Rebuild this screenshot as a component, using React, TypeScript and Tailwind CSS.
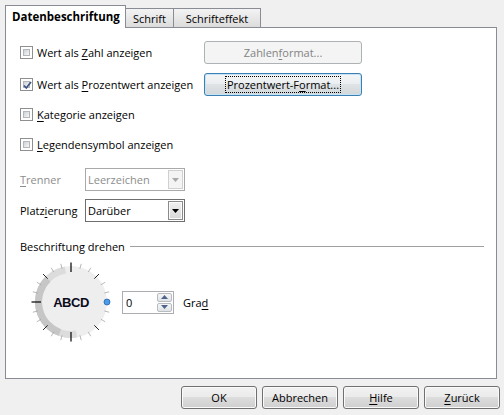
import React from "react";

const Check = ({ checked }: { checked?: boolean }) => (
  <span className="relative w-[13px] h-[13px] shrink-0 border border-[#8e8f8f] bg-white p-[2px] flex">
    <span className="flex-1 border border-[#b3b7bd] bg-[linear-gradient(135deg,#cdd1d6,#f7f7f7)]" />
    {checked && (
      <svg className="absolute left-[1px] top-[1px]" width="11" height="11" viewBox="0 0 11 11">
        <path d="M2 5.5 L4.3 8 L9 2" fill="none" stroke="#3e5283" strokeWidth="1.7" />
      </svg>
    )}
  </span>
);

const Btn = ({
  children,
  kind,
  w,
}: {
  children: React.ReactNode;
  kind: "normal" | "disabled" | "focus";
  w: string;
}) => {
  const base =
    "h-[23px] rounded-[3px] border flex items-center justify-center shrink-0 " + w + " ";
  const k =
    kind === "disabled"
      ? "border-[#adb2b5] bg-[#f4f4f4] text-[#838383]"
      : kind === "focus"
      ? "border-[#3c7fb1] bg-[linear-gradient(to_bottom,#f3f5f6_0%,#eceff1_45%,#dfe3e6_50%,#d2d7da_100%)] shadow-[inset_0_0_0_1px_#c6e4f6]"
      : "border-[#707070] bg-[linear-gradient(to_bottom,#f2f2f2_0%,#ebebeb_45%,#dddddd_50%,#cfcfcf_100%)] shadow-[inset_0_0_0_1px_#fafafa]";
  return <div className={base + k}>{children}</div>;
};

const U = ({ children }: { children: React.ReactNode }) => (
  <span className="underline underline-offset-[2px] decoration-[1px]">{children}</span>
);

const Arrow = ({ color }: { color: string }) => (
  <svg width="7" height="4" viewBox="0 0 7 4">
    <path d="M0 0 H7 L3.5 4 Z" fill={color} />
  </svg>
);

function Dial() {
  const c = 45;
  const p = (r: number, a: number) => {
    const t = (a * Math.PI) / 180;
    return [c + r * Math.cos(t), c - r * Math.sin(t)];
  };
  const arc = (r: number, a1: number, a2: number) => {
    const [x1, y1] = p(r, a1);
    const [x2, y2] = p(r, a2);
    const large = a2 - a1 > 180 ? 1 : 0;
    return `M${x1} ${y1} A${r} ${r} 0 ${large} 0 ${x2} ${y2}`;
  };
  const ticks = [];
  for (let a = 15; a < 360; a += 15) {
    const major = a % 90 === 0;
    const mid = a % 45 === 0 && !major;
    const r1 = major ? 30 : mid ? 33 : 34.5;
    const r2 = 39.5;
    const [x1, y1] = p(r1, a);
    const [x2, y2] = p(r2, a);
    ticks.push(
      <line
        key={a}
        x1={x1}
        y1={y1}
        x2={x2}
        y2={y2}
        stroke={major ? "#111" : mid ? "#222" : "#9a9a9a"}
        strokeWidth={major ? 1.3 : mid ? 1 : 0.7}
      />
    );
  }
  return (
    <svg width="90" height="90" viewBox="0 0 90 90" className="ml-[6px] shrink-0">
      <circle cx={c} cy={c} r={36} fill="#eeeeee" />
      <path d={arc(32.5, 100, 280)} stroke="#dcdcdc" strokeWidth="7" fill="none" />
      <path d={arc(32.5, 135, 250)} stroke="#c6c6c6" strokeWidth="7" fill="none" />
      {ticks}
      <circle cx={c + 36} cy={c} r={3} fill="#4b9be8" stroke="#2a64a8" strokeWidth="0.8" />
      <text
        x={c}
        y={c + 4.5}
        textAnchor="middle"
        fontFamily="'Liberation Sans', Arial, sans-serif"
        fontWeight="bold"
        fontSize="13"
        letterSpacing="-0.5"
        fill="#0b0b1a"
      >
        ABCD
      </text>
    </svg>
  );
}

export default function App() {
  return (
    <div className="w-[504px] h-[415px] bg-[#f0f0f0] flex flex-col font-['Open_Sans',sans-serif] text-[11px] leading-none text-black">
      {/* tabs */}
      <div className="flex items-end pl-[5px] pt-[5px] h-[27px]">
        <div className="relative z-10 w-[121px] h-[23px] -mb-px bg-white border border-b-0 border-[#898c95] flex items-center pl-[6px] font-bold text-[11.5px]">
          Datenbeschriftung
        </div>
        <div className="w-[49px] h-[19px] -ml-px border border-b-0 border-[#898c95] bg-[linear-gradient(to_bottom,#f3f3f3,#dcdcdc)] flex items-center justify-center">
          Schrift
        </div>
        <div className="w-[88px] h-[19px] -ml-px border border-b-0 border-[#898c95] bg-[linear-gradient(to_bottom,#f3f3f3,#dcdcdc)] flex items-center justify-center">
          Schrifteffekt
        </div>
      </div>

      {/* panel */}
      <div className="ml-[5px] w-[492px] h-[352px] bg-white border border-[#898c95] flex flex-col pl-[14px] pr-[12px] pt-[12px]">
        <div className="h-[24px] flex items-center">
          <div className="w-[184px] flex items-center gap-[4px]">
            <Check />
            <span>
              Wert als <U>Z</U>ahl anzeigen
            </span>
          </div>
          <Btn kind="disabled" w="w-[158px]">
            <span>
              Zahlen<U>f</U>ormat...
            </span>
          </Btn>
        </div>

        <div className="mt-[8px] h-[24px] flex items-center">
          <div className="w-[184px] flex items-center gap-[4px]">
            <Check checked />
            <span>
              Wert als <U>P</U>rozentwert anzeigen
            </span>
          </div>
          <Btn kind="focus" w="w-[158px]">
            <span className="outline outline-1 outline-dotted outline-black px-[1px] py-[2px]">
              Prozentwert-F<U>o</U>rmat...
            </span>
          </Btn>
        </div>

        <div className="mt-[6px] h-[24px] flex items-center gap-[4px]">
          <Check />
          <span>
            <U>K</U>ategorie anzeigen
          </span>
        </div>

        <div className="mt-[6px] h-[24px] flex items-center gap-[4px]">
          <Check />
          <span>
            <U>L</U>egendensymbol anzeigen
          </span>
        </div>

        <div className="mt-[12px] h-[23px] flex items-center">
          <span className="w-[65px] text-[#8d8d8d]">
            <U>T</U>renner
          </span>
          <div className="w-[100px] h-[23px] border border-[#a9a9a9] bg-white flex items-center p-[1px]">
            <span className="flex-1 pl-[1px] text-[#8d8d8d]">Leerzeichen</span>
            <div className="w-[15px] h-full border border-[#d0d0d0] bg-[#f4f4f4] flex items-center justify-center">
              <Arrow color="#a8a8a8" />
            </div>
          </div>
        </div>

        <div className="mt-[8px] h-[23px] flex items-center">
          <span className="w-[65px]">
            Platz<U>i</U>erung
          </span>
          <div className="w-[100px] h-[23px] border border-[#6f6f6f] bg-white flex items-center p-[1px]">
            <span className="flex-1 pl-[1px]">Darüber</span>
            <div className="w-[15px] h-full border border-[#8a8a8a] bg-[linear-gradient(to_bottom,#f0f0f0,#d8d8d8)] shadow-[inset_0_0_0_1px_#fafafa] flex items-center justify-center">
              <Arrow color="#000" />
            </div>
          </div>
        </div>

        <div className="mt-[17px] h-[14px] flex items-center gap-[5px]">
          <span>Beschriftung drehen</span>
          <div className="flex-1 h-px bg-[#a0a0a0]" />
        </div>

        <div className="mt-[4px] h-[90px] flex items-center">
          <Dial />
          <div className="ml-[6px] w-[52px] h-[23px] border border-[#abadb3] bg-white flex items-center">
            <span className="flex-1 pl-[3px]">0</span>
            <div className="w-[16px] h-full flex flex-col gap-px py-[1px] pr-[1px]">
              <div className="flex-1 border border-[#b8bcc0] rounded-[2px] bg-[linear-gradient(to_bottom,#f6f6f6,#dfe3e6)] flex items-center justify-center">
                <svg width="7" height="4" viewBox="0 0 7 4">
                  <path d="M0 4 H7 L3.5 0 Z" fill="#4f6488" />
                </svg>
              </div>
              <div className="flex-1 border border-[#b8bcc0] rounded-[2px] bg-[linear-gradient(to_bottom,#f6f6f6,#dfe3e6)] flex items-center justify-center">
                <Arrow color="#4f6488" />
              </div>
            </div>
          </div>
          <span className="ml-[9px]">
            Gra<U>d</U>
          </span>
        </div>
      </div>

      {/* bottom buttons */}
      <div className="flex justify-end gap-[5px] pr-[4px] mt-[7px]">
        <Btn kind="normal" w="w-[76px]">OK</Btn>
        <Btn kind="normal" w="w-[76px]">Abbrechen</Btn>
        <Btn kind="normal" w="w-[76px]">
          <span>
            <U>H</U>ilfe
          </span>
        </Btn>
        <Btn kind="normal" w="w-[76px]">
          <span>
            <U>Z</U>urück
          </span>
        </Btn>
      </div>
    </div>
  );
}
